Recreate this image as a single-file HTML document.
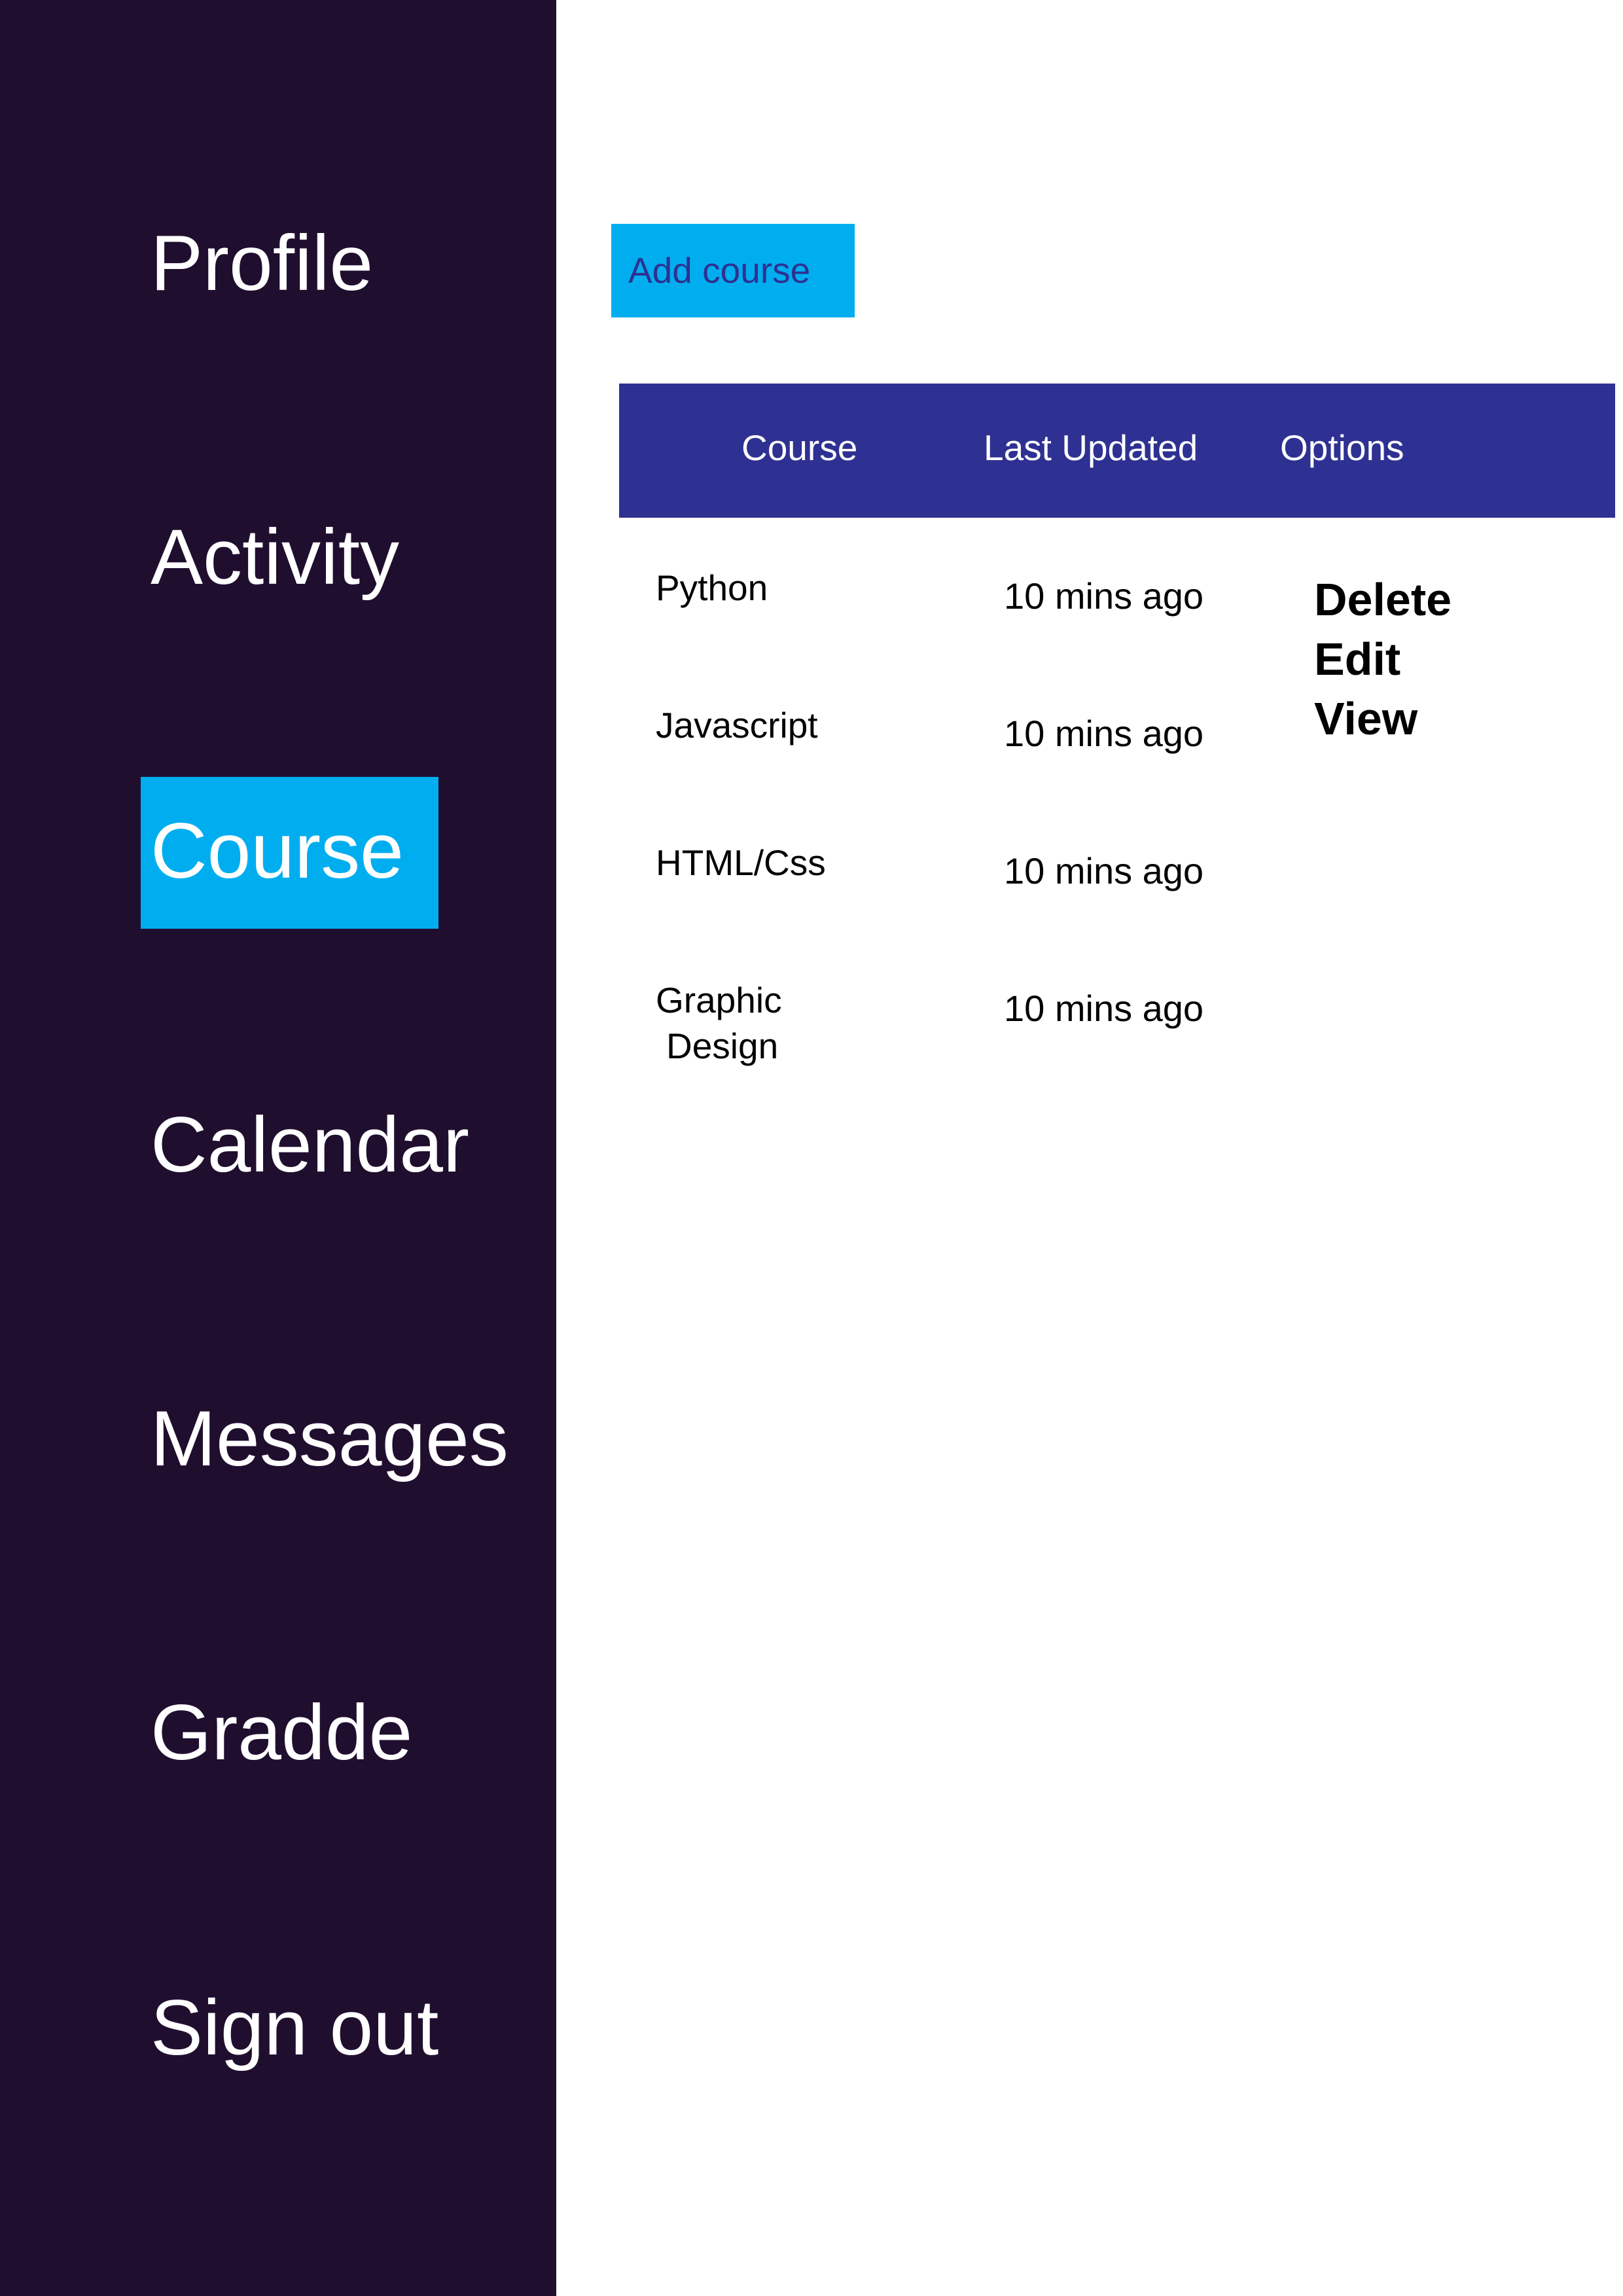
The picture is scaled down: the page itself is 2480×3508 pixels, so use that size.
<!DOCTYPE html>
<html><head><meta charset="utf-8"><style>
html,body{margin:0;padding:0}
body{width:2480px;height:3508px;position:relative;background:#fff;font-family:"Liberation Sans","DejaVu Sans",sans-serif;overflow:hidden}
.t{position:absolute;white-space:nowrap;line-height:1}
#side{position:absolute;left:0;top:0;width:850px;height:3508px;background:#200e2f}
.nav{color:#fff;font-size:120px;left:230px}
</style></head><body>
<div id="side"></div>
<div style="position:absolute;left:215px;top:1187px;width:455px;height:232px;background:#00aeef"></div>
<div class="t nav" style="top:342px">Profile</div>
<div class="t nav" style="top:791px">Activity</div>
<div class="t nav" style="top:1240px">Course</div>
<div class="t nav" style="top:1689px">Calendar</div>
<div class="t nav" style="top:2138px">Messages</div>
<div class="t nav" style="top:2587px">Gradde</div>
<div class="t nav" style="top:3038px">Sign out</div>

<div style="position:absolute;left:934px;top:342px;width:372px;height:143px;background:#00aeef"></div>
<div class="t" style="left:960px;top:386px;font-size:55px;color:#2e3192">Add course</div>

<div style="position:absolute;left:946px;top:586px;width:1522px;height:205px;background:#2e3192"></div>
<div class="t" style="left:1133px;top:657px;font-size:55px;color:#fff">Course</div>
<div class="t" style="left:1503px;top:657px;font-size:55px;color:#fff">Last Updated</div>
<div class="t" style="left:1956px;top:657px;font-size:55px;color:#fff">Options</div>

<div class="t" style="left:1002px;top:871px;font-size:55px">Python</div>
<div class="t" style="left:1002px;top:1081px;font-size:55px">Javascript</div>
<div class="t" style="left:1002px;top:1291px;font-size:55px">HTML/Css</div>
<div class="t" style="left:1002px;top:1501px;font-size:55px">Graphic</div>
<div class="t" style="left:1018px;top:1571px;font-size:55px">Design</div>

<div class="t" style="left:1534px;top:883px;font-size:56px">10 mins ago</div>
<div class="t" style="left:1534px;top:1093px;font-size:56px">10 mins ago</div>
<div class="t" style="left:1534px;top:1303px;font-size:56px">10 mins ago</div>
<div class="t" style="left:1534px;top:1513px;font-size:56px">10 mins ago</div>

<div class="t" style="left:2008px;top:881px;font-size:70px;font-weight:bold">Delete</div>
<div class="t" style="left:2008px;top:972px;font-size:70px;font-weight:bold">Edit</div>
<div class="t" style="left:2008px;top:1063px;font-size:70px;font-weight:bold">View</div>
</body></html>
